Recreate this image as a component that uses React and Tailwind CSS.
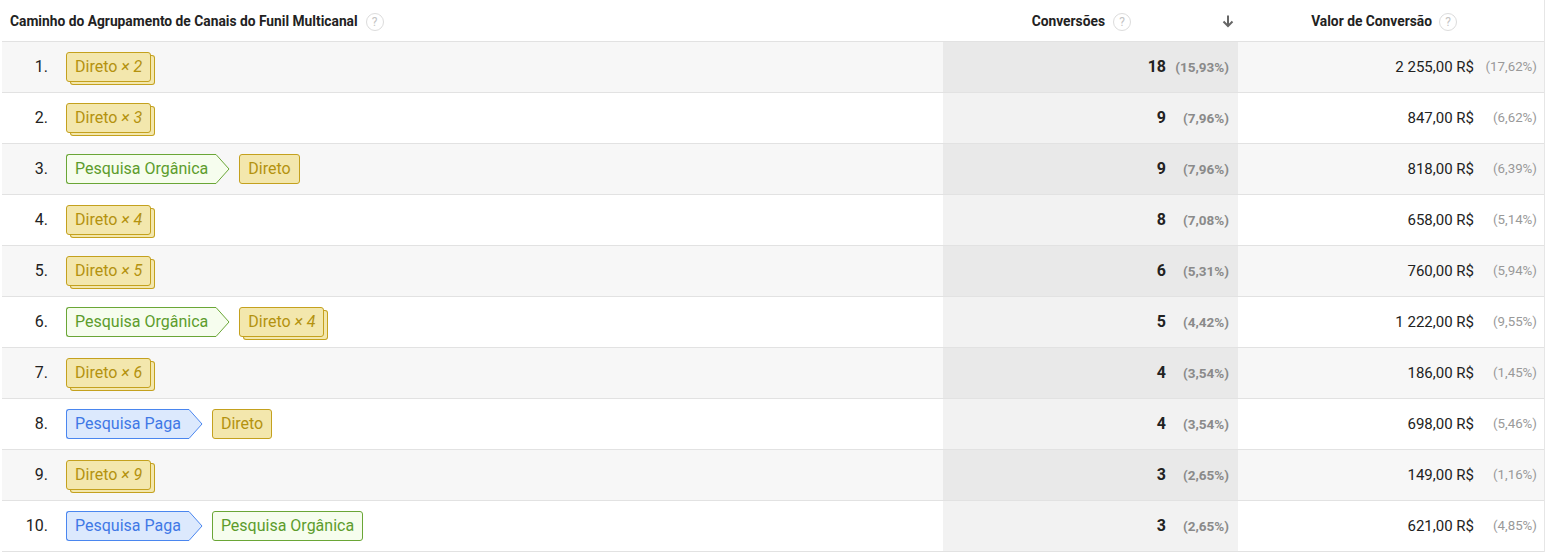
import React from "react";

const rows = [
  { path: [["d", 2]], conv: "18", convPct: "(15,93%)", val: "2 255,00 R$", valPct: "(17,62%)" },
  { path: [["d", 3]], conv: "9", convPct: "(7,96%)", val: "847,00 R$", valPct: "(6,62%)" },
  { path: [["o"], ["d"]], conv: "9", convPct: "(7,96%)", val: "818,00 R$", valPct: "(6,39%)" },
  { path: [["d", 4]], conv: "8", convPct: "(7,08%)", val: "658,00 R$", valPct: "(5,14%)" },
  { path: [["d", 5]], conv: "6", convPct: "(5,31%)", val: "760,00 R$", valPct: "(5,94%)" },
  { path: [["o"], ["d", 4]], conv: "5", convPct: "(4,42%)", val: "1 222,00 R$", valPct: "(9,55%)" },
  { path: [["d", 6]], conv: "4", convPct: "(3,54%)", val: "186,00 R$", valPct: "(1,45%)" },
  { path: [["p"], ["d"]], conv: "4", convPct: "(3,54%)", val: "698,00 R$", valPct: "(5,46%)" },
  { path: [["d", 9]], conv: "3", convPct: "(2,65%)", val: "149,00 R$", valPct: "(1,16%)" },
  { path: [["p"], ["o"]], conv: "3", convPct: "(2,65%)", val: "621,00 R$", valPct: "(4,85%)" },
];

const styles = {
  d: { label: "Direto", bg: "bg-[#f3e7ad]", border: "border-[#c4a11e]", text: "text-[#b4920f]", fill: "#f3e7ad", stroke: "#c4a11e" },
  o: { label: "Pesquisa Orgânica", bg: "bg-[#f6fdee]", border: "border-[#6aa636]", text: "text-[#5c9c2c]", fill: "#f6fdee", stroke: "#6aa636" },
  p: { label: "Pesquisa Paga", bg: "bg-[#dce9fd]", border: "border-[#4a86ef]", text: "text-[#3f78e6]", fill: "#dce9fd", stroke: "#4a86ef" },
};

function Help() {
  return (
    <span className="inline-flex h-[18px] w-[18px] items-center justify-center rounded-full border border-[#dcdcdc] text-[12px] font-normal text-[#c4c4c4]">
      ?
    </span>
  );
}

function Chip({ kind, count, arrow }) {
  const s = styles[kind];
  const body = (
    <span className={`${s.text} text-[16px] leading-none`}>
      {s.label}
      {count && <span className="italic"> × {count}</span>}
    </span>
  );
  if (arrow) {
    return (
      <div className="flex h-[30px] items-stretch">
        <div className={`flex items-center rounded-l-[3px] border-y border-l pl-[8px] pr-[7px] ${s.bg} ${s.border}`}>
          {body}
        </div>
        <svg width="15" height="30" viewBox="0 0 15 30" className="block">
          <polygon points="0,0.5 1,0.5 14,15 1,29.5 0,29.5" fill={s.fill} />
          <polyline points="0,0.5 1,0.5 14,15 1,29.5 0,29.5" fill="none" stroke={s.stroke} strokeWidth="1" />
        </svg>
      </div>
    );
  }
  const stacked = count ? "shadow-[4px_3px_0_-1px_#f3e7ad,4px_3px_0_0_#c4a11e]" : "";
  return (
    <div className={`flex h-[30px] items-center rounded-[3px] border px-[8px] ${s.bg} ${s.border} ${stacked}`}>
      {body}
    </div>
  );
}

export default function App() {
  return (
    <div className="w-[1548px] bg-white pl-[2px] font-['Roboto',sans-serif] text-[#222]">
      <div className="w-[1543px] border-r border-[#e6e6e6]">
        <div className="flex h-[42px] items-center border-b border-[#e2e2e2] pt-[2px] text-[13.8px] font-bold text-[#222]">
          <div className="flex w-[941px] items-center gap-[8px] pl-[8px]">
            <span>Caminho do Agrupamento de Canais do Funil Multicanal</span>
            <Help />
          </div>
          <div className="flex w-[295px] items-center justify-end pr-[4px]">
            <span>Conversões</span>
            <span className="ml-[8px]"><Help /></span>
            <svg width="12" height="13" viewBox="0 0 12 13" className="ml-[91px]">
              <path d="M6 0.5v10M1.5 6.5L6 11l4.5-4.5" stroke="#666" strokeWidth="2" fill="none" />
            </svg>
          </div>
          <div className="flex flex-1 items-center justify-end gap-[7px] pr-[87px]">
            <span>Valor de Conversão</span>
            <Help />
          </div>
        </div>
        {rows.map((r, i) => {
          const odd = i % 2 === 0;
          return (
            <div
              key={i}
              className={`flex h-[51px] items-center border-b border-[#e2e2e2] ${odd ? "bg-[#f7f7f7]" : "bg-white"}`}
            >
              <div className="flex w-[941px] items-center">
                <span className="w-[46px] text-right text-[16px]">{i + 1}.</span>
                <div className="ml-[18px] flex items-center gap-[9px]">
                  {r.path.map((p, j) => (
                    <Chip key={j} kind={p[0]} count={p[1]} arrow={j < r.path.length - 1} />
                  ))}
                </div>
              </div>
              <div
                className={`flex h-full w-[295px] items-center justify-end pr-[9px] ${odd ? "bg-[#e9e9e9]" : "bg-[#f2f2f2]"}`}
              >
                <span className="text-[16px] font-bold">{r.conv}</span>
                <span className="w-[63px] text-right text-[13.5px] font-bold text-[#8a8a8a]">{r.convPct}</span>
              </div>
              <div className="flex flex-1 items-center justify-end pr-[7px]">
                <span className="text-[15px]">{r.val}</span>
                <span className="w-[63px] text-right text-[13.3px] text-[#999]">{r.valPct}</span>
              </div>
            </div>
          );
        })}
      </div>
    </div>
  );
}
